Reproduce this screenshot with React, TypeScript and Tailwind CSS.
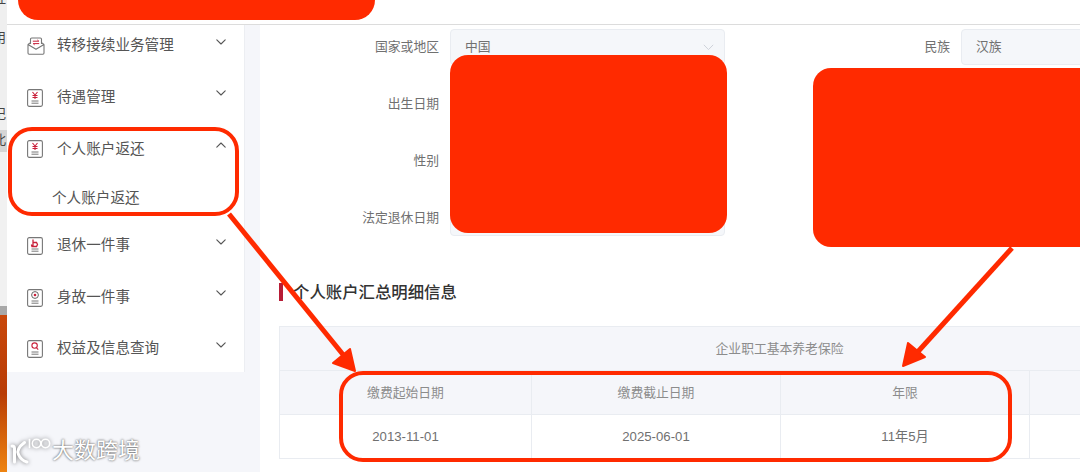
const RED = "#ff2a00";

function Chevron({ up = false }: { up?: boolean }) {
  return (
    <svg width="10" height="6" viewBox="0 0 10 6" fill="none" className="mb-[9px]">
      <path d={up ? "M.8 5.2 5 1l4.2 4.2" : "M.8.8 5 5 9.2.8"} stroke="#555" strokeWidth="1.1" strokeLinecap="round" strokeLinejoin="round" />
    </svg>
  );
}

function DocIcon({ kind }: { kind: string }) {
  return (
    <svg width="16" height="18" viewBox="0 0 16 18" fill="none">
      <rect x="0.6" y="0.6" width="14.8" height="16.8" rx="1.6" stroke="#777" strokeWidth="1.1" fill="#fff" />
      {kind === "yen" && (
        <path d="M5.5 3 8 6l2.5-3M8 6v4M5.5 6.5h5M5.5 8.5h5" stroke="#c8203a" strokeWidth="1.1" />
      )}
      {kind === "bag" && (
        <path d="M6 2.5v7M6 5.5h3.5l1 2-1 2H5l-.6-2" stroke="#c8203a" strokeWidth="1.3" />
      )}
      {kind === "person" && (
        <g>
          <circle cx="8" cy="6" r="3.4" stroke="#666" strokeWidth="1" />
          <circle cx="8" cy="6" r="1.3" fill="#c8203a" />
        </g>
      )}
      {kind === "search" && (
        <g stroke="#c8203a" strokeWidth="1.1">
          <circle cx="7.6" cy="5.6" r="2.7" />
          <path d="m9.6 7.8 1.6 1.8" />
        </g>
      )}
      <path d="M4.5 12h7M4.5 14.2h7" stroke="#777" strokeWidth="1" />
    </svg>
  );
}

function MailIcon() {
  return (
    <svg width="18" height="18" viewBox="0 0 18 18" fill="none">
      <path d="M3.5 7V2.2C3.5 1.5 4 1 4.7 1h8.6c.7 0 1.2.5 1.2 1.2V7" stroke="#777" strokeWidth="1.1" />
      <path d="M1 7.5 3.5 5.6M17 7.5l-2.5-1.9M1 7.5v8.6c0 .6.5 1.1 1.1 1.1h13.8c.6 0 1.1-.5 1.1-1.1V7.5l-8 4.8-8-4.8Z" stroke="#777" strokeWidth="1.1" strokeLinejoin="round" />
      <path d="M5.8 4.2h6l-1.4-1.2M12.2 6.6h-6l1.4 1.2" stroke="#c8203a" strokeWidth="1" />
    </svg>
  );
}

function MenuItem({ icon, label, up = false }: { icon: React.ReactNode; label: string; up?: boolean }) {
  return (
    <div className="flex h-[51.6px] items-center pl-[20px] pr-[18px]">
      <div className="flex w-[30px] items-center justify-start">{icon}</div>
      <span className="flex-1 text-[14.6px] text-[#555]">{label}</span>
      <Chevron up={up} />
    </div>
  );
}

function Field({ label, value, labelW, select = false, w }: { label: string; value?: string; labelW: string; select?: boolean; w: string }) {
  return (
    <div className="flex h-[36px] items-center gap-[11px]">
      <div className={`${labelW} shrink-0 text-right text-[12.8px] text-[#707070]`}>{label}</div>
      <div className={`${w} flex h-[36px] shrink-0 items-center justify-between rounded-[4px] border border-[#e9ecf1] bg-[#f5f7fa] pl-[14px] pr-[10px] text-[12.8px] text-[#707070]`}>
        <span>{value}</span>
        {select && (
          <svg width="11" height="7" viewBox="0 0 11 7" fill="none">
            <path d="M.8.8 5.5 5.6 10.2.8" stroke="#cfd3da" strokeWidth="1" />
          </svg>
        )}
      </div>
    </div>
  );
}

export default function App() {
  return (
    <div className="relative flex h-[472px] w-[1080px] overflow-hidden bg-white font-['Liberation_Sans','Noto_Sans_CJK_SC',sans-serif]">
      {/* desktop behind the window */}
      <div className="flex w-[7px] shrink-0 flex-col overflow-hidden bg-[#efefef] text-[13px] leading-[16px] text-[#444]">
        <div className="-ml-[7px] -mt-[9px] h-[16px] whitespace-nowrap">证</div>
        <div className="-ml-[7px] mt-[23px] h-[16px] whitespace-nowrap">用</div>
        <div className="-ml-[7px] mt-[60px] h-[16px] whitespace-nowrap">记</div>
        <div className="mt-[8px] h-[22px] bg-[#d5d5d5]">
          <div className="-ml-[7px] mt-[2px] whitespace-nowrap">北</div>
        </div>
        <div className="flex-1 bg-[#f1f1f1]" />
        <div className="h-[9px] bg-[#a8a8a8]" />
        <div className="h-[157px] bg-gradient-to-b from-[#c9480a] via-[#b83c06] to-[#ee8412]" />
      </div>

      {/* window */}
      <div className="flex min-w-0 flex-1 flex-col bg-[#f5f6fa]">
        <div className="h-[25px] shrink-0 border-b border-[#dcdcdc] bg-white" />
        <div className="flex min-h-0 flex-1">
          {/* sidebar */}
          <div className="w-[253px] shrink-0 overflow-hidden">
            <div className="-mt-[4.5px] h-[351.5px] w-[238px] overflow-hidden border-r border-[#eceef2] bg-white">
              <MenuItem icon={<MailIcon />} label="转移接续业务管理" />
              <MenuItem icon={<DocIcon kind="yen" />} label="待遇管理" />
              <MenuItem icon={<DocIcon kind="yen" />} label="个人账户返还" up />
              <div className="flex h-[45px] items-center pl-[45px] pt-[2px] text-[14.6px] text-[#555]">个人账户返还</div>
              <MenuItem icon={<DocIcon kind="bag" />} label="退休一件事" />
              <MenuItem icon={<DocIcon kind="person" />} label="身故一件事" />
              <MenuItem icon={<DocIcon kind="search" />} label="权益及信息查询" />
            </div>
          </div>

          {/* main */}
          <div className="min-w-0 flex-1 overflow-hidden bg-white pt-[4px]">
            <div className="flex flex-col gap-[21px]">
              <div className="flex">
                <Field label="国家或地区" value="中国" labelW="w-[179px]" w="w-[275px]" select />
                <Field label="民族" value="汉族" labelW="w-[225px]" w="w-[260px]" />
              </div>
              <div className="flex">
                <Field label="出生日期" labelW="w-[179px]" w="w-[275px]" />
              </div>
              <div className="flex">
                <Field label="性别" labelW="w-[179px]" w="w-[275px]" />
              </div>
              <div className="flex">
                <Field label="法定退休日期" labelW="w-[179px]" w="w-[275px]" />
              </div>
            </div>

            <div className="ml-[19px] mt-[46px] flex h-[20px] items-center">
              <div className="h-[18px] w-[4px] bg-[#b71c36]" />
              <h2 className="ml-[10px] text-[16.4px] font-medium text-[#333]">个人账户汇总明细信息</h2>
            </div>

            <table className="ml-[19px] mt-[24px] w-[1000px] table-fixed border-collapse text-[12.8px]">
              <colgroup>
                <col className="w-[252px]" />
                <col className="w-[249px]" />
                <col className="w-[249px]" />
                <col className="w-[250px]" />
              </colgroup>
              <tbody>
                <tr className="h-[44px] bg-[#f5f6fa] text-[#8c8c8c]">
                  <td colSpan={4} className="border border-[#e9ecf1] text-center">企业职工基本养老保险</td>
                </tr>
                <tr className="h-[44px] bg-[#f5f6fa] text-[#8c8c8c]">
                  <td className="border border-[#e9ecf1] text-center">缴费起始日期</td>
                  <td className="border border-[#e9ecf1] text-center">缴费截止日期</td>
                  <td className="border border-[#e9ecf1] text-center">年限</td>
                  <td className="border border-[#e9ecf1]" />
                </tr>
                <tr className="h-[44px] text-[13.2px] text-[#707070]">
                  <td className="border border-[#e9ecf1] text-center">2013-11-01</td>
                  <td className="border border-[#e9ecf1] text-center">2025-06-01</td>
                  <td className="border border-[#e9ecf1] text-center">11年5月</td>
                  <td className="border border-[#e9ecf1]" />
                </tr>
              </tbody>
            </table>
          </div>
        </div>
      </div>

      {/* redaction blobs */}
      <div className="absolute left-[18px] top-[-30px] h-[50px] w-[357px] rounded-[20px] bg-[#ff2a00]" />
      <div className="absolute left-[450px] top-[55px] h-[178px] w-[277px] rounded-[18px] bg-[#ff2a00]" />
      <div className="absolute left-[813px] top-[68px] h-[179px] w-[290px] rounded-[18px] bg-[#ff2a00]" />

      {/* annotation outlines */}
      <div className="absolute left-[8px] top-[127px] h-[89px] w-[231px] rounded-[24px] border-[4px] border-[#ff2a00]" />
      <div className="absolute left-[339px] top-[371px] h-[91px] w-[673px] rounded-[24px] border-[4px] border-[#ff2a00]" />

      {/* arrows */}
      <svg className="absolute left-0 top-0" width="1080" height="472" viewBox="0 0 1080 472" fill="none">
        <path d="M229 214 345 357" stroke={RED} strokeWidth="5" />
        <path d="M355 371 333 363 350 349Z" fill={RED} stroke={RED} strokeWidth="2" strokeLinejoin="round" />
        <path d="M1012 248 914 356" stroke={RED} strokeWidth="5" />
        <path d="M903 366 925 357 908 343Z" fill={RED} stroke={RED} strokeWidth="2" strokeLinejoin="round" />
      </svg>

      {/* watermark */}
      <div className="absolute left-[9px] top-[436px] flex items-center">
        <svg width="43" height="30" viewBox="0 0 43 30" fill="none" className="drop-shadow-[0_0_2px_rgba(0,0,0,0.5)]">
          <path d="M3 10q2.5 0 2.5 2.5V26" stroke="#fff" strokeWidth="3" strokeLinecap="round" strokeLinejoin="round" />
          <path d="M15.5 6.5C9.5 11 8 15.5 9.5 18.5 11 22 14 25 18 26" stroke="#fff" strokeWidth="3" strokeLinecap="round" />
          <path d="M20.5 3.5v8" stroke="#fff" strokeWidth="1.6" strokeLinecap="round" />
          <circle cx="27.5" cy="7.5" r="4.2" stroke="#fff" strokeWidth="1.6" />
          <circle cx="36.5" cy="7.5" r="4.2" stroke="#fff" strokeWidth="1.6" />
        </svg>
        <span className="text-[22px] leading-[30px] text-white [text-shadow:0_0_2px_rgba(0,0,0,0.6),0_0_3px_rgba(0,0,0,0.3)]">大数跨境</span>
      </div>
    </div>
  );
}
